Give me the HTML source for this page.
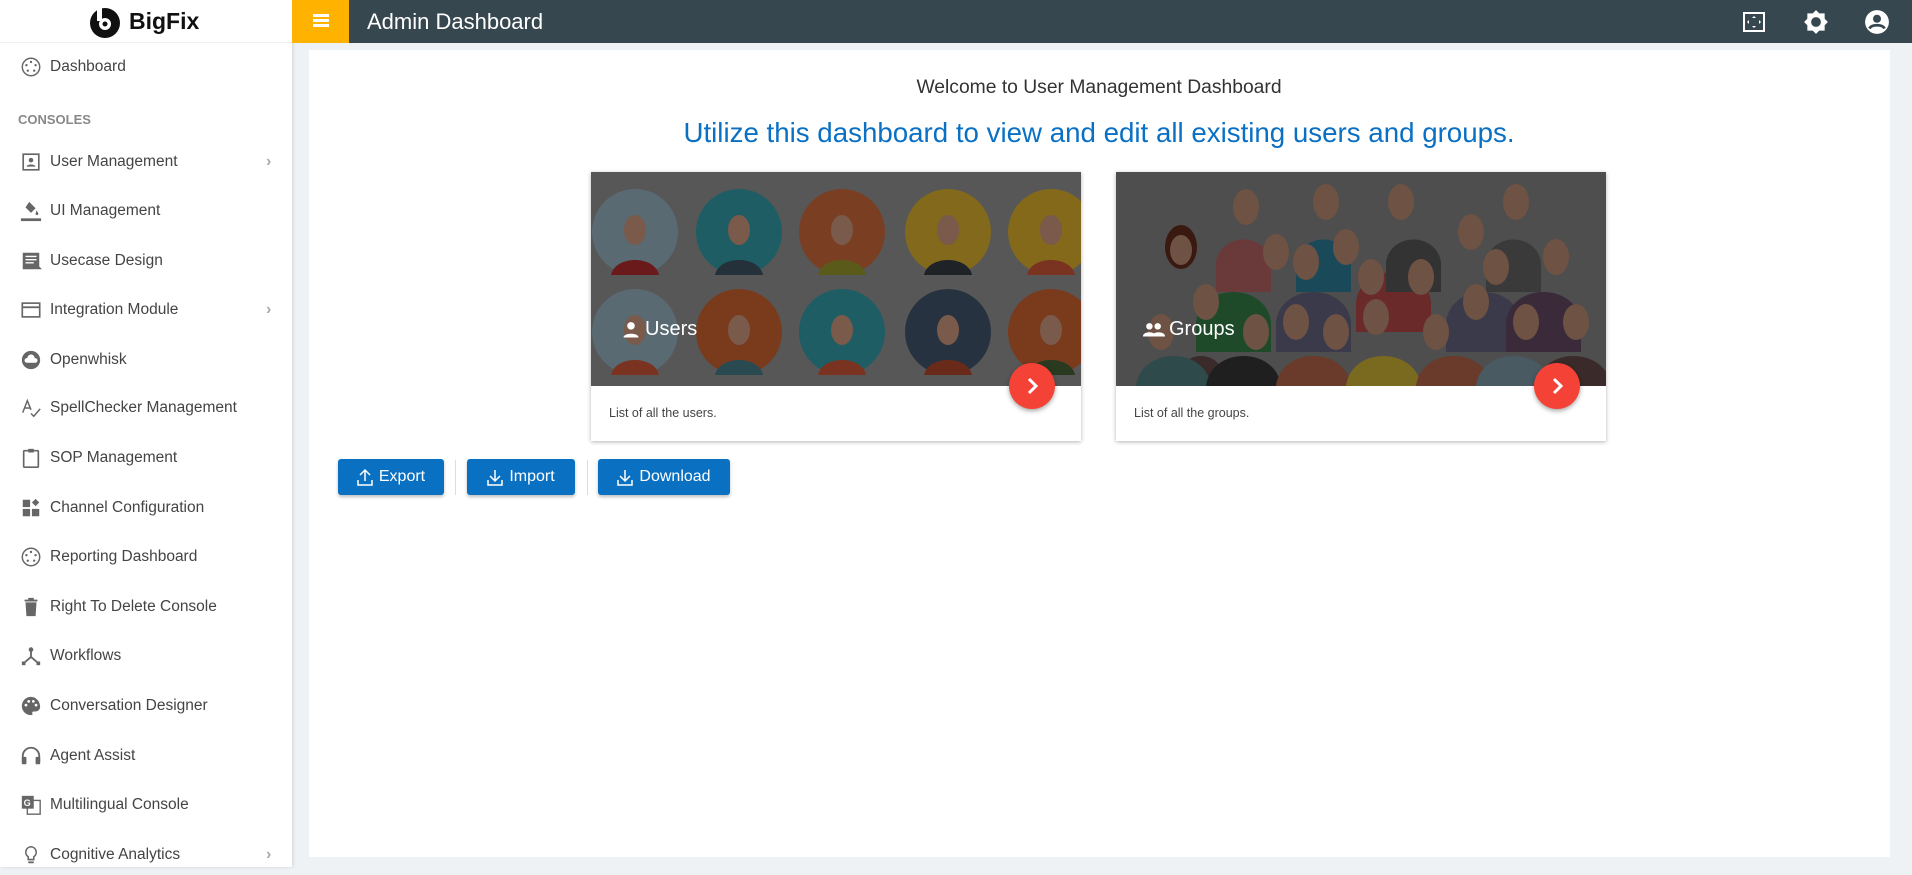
<!DOCTYPE html>
<html><head><meta charset="utf-8"><style>
*{box-sizing:border-box;margin:0;padding:0}
body{width:1912px;height:867px;overflow:hidden;background:#eef2f5;font-family:"Liberation Sans",sans-serif;position:relative}
.sb{position:absolute;left:0;top:0;width:292px;height:867px;background:#fff;box-shadow:1px 0 3px rgba(0,0,0,.12)}
.logo{position:absolute;left:0;top:0;width:292px;height:43px;border-bottom:1px solid #f0f0f0}
.item{position:absolute;left:0;width:292px;height:40px;display:flex;align-items:center;color:#444;font-size:15.5px}
.item svg{position:absolute;left:20px;width:22px;height:22px;fill:#666}
.item span{position:absolute;left:50px}
.item .ch{position:absolute;left:266px;color:#aaa;font-size:16px}
.hdr{position:absolute;left:292px;top:0;right:0;height:43px;background:#37474f}
.ham{position:absolute;left:292px;top:0;width:57px;height:43px;background:#ffb300}
.panel{position:absolute;left:309px;top:50px;width:1581px;height:807px;background:#fff}
.card{position:absolute;top:172px;width:490px;height:269px;background:#fff;box-shadow:0 1px 4px rgba(0,0,0,.3)}
.card .img{position:absolute;left:0;top:0;width:490px;height:214px;overflow:hidden;background:#555}
.card .txt{position:absolute;left:18px;top:234px;font-size:12.5px;color:#444}
.fab{position:absolute;width:46px;height:46px;border-radius:50%;background:#f44336;top:191px;left:418px;box-shadow:0 2px 5px rgba(0,0,0,.35)}
.btn{position:absolute;top:459px;height:36px;background:#0a70c2;border-radius:3px;color:#fff;font-size:16px;display:flex;align-items:center;justify-content:center;gap:6px;box-shadow:0 2px 3px rgba(0,0,0,.25)}
.sep{position:absolute;top:460px;width:1px;height:35px;background:#ddd}
</style></head><body>
<div class="sb">
 <div class="logo">
  <svg style="position:absolute;left:88px;top:5px" width="34" height="34" viewBox="0 0 34 34"><circle cx="17" cy="18" r="15" fill="#111"/><circle cx="17" cy="19" r="6" fill="#fff"/><circle cx="17" cy="19" r="2.5" fill="#111"/><rect x="9" y="2" width="5" height="14" fill="#fff"/></svg>
  <div style="position:absolute;left:129px;top:8px;font-size:23px;font-weight:bold;color:#111">BigFix</div>
 </div>
 <div class="item" style="top:47px"><svg viewBox="0 0 24 24"><circle cx="12" cy="12" r="9.5" fill="none" stroke="#666" stroke-width="1.6"/><circle cx="12" cy="6.5" r="1.3"/><circle cx="7" cy="10" r="1.3"/><circle cx="17" cy="10" r="1.3"/><circle cx="8.5" cy="16" r="1.3"/><circle cx="15.5" cy="16" r="1.3"/></svg><span>Dashboard</span></div>
 <div style="position:absolute;left:18px;top:112px;font-size:13px;color:#888;font-weight:bold">CONSOLES</div>
 <div class="item" style="top:142px"><svg viewBox="0 0 24 24"><rect x="3.5" y="3.5" width="17" height="17" fill="none" stroke="#666" stroke-width="1.8"/><circle cx="12" cy="10" r="2.5"/><path d="M7 17c1-3 9-3 10 0z"/></svg><span>User Management</span><b class="ch">&#8250;</b></div>
 <div class="item" style="top:191px"><svg viewBox="0 0 24 24"><path d="M10 2l7 7-5 5-6-6z M18 11c1 2 2 3 2 4a1.5 1.5 0 0 1-3 0c0-1 1-2 1-4z"/><rect x="1" y="20" width="22" height="3"/></svg><span>UI Management</span></div>
 <div class="item" style="top:241px"><svg viewBox="0 0 24 24"><path d="M3 3h18v15l3 3H3z" /><path d="M6 7h12M6 10.5h12M6 14h9" stroke="#fff" stroke-width="1.5"/></svg><span>Usecase Design</span></div>
 <div class="item" style="top:290px"><svg viewBox="0 0 24 24"><rect x="2.5" y="4.5" width="19" height="15" fill="none" stroke="#666" stroke-width="1.8"/><rect x="2.5" y="8" width="19" height="2"/></svg><span>Integration Module</span><b class="ch">&#8250;</b></div>
 <div class="item" style="top:340px"><svg viewBox="0 0 24 24"><circle cx="12" cy="12" r="10"/><path d="M7 15h10a2.5 2.5 0 0 0-1-5 4 4 0 0 0-8 0 2.5 2.5 0 0 0-1 5z" fill="#fff"/></svg><span>Openwhisk</span></div>
 <div class="item" style="top:388px"><svg viewBox="0 0 24 24"><path d="M3 17L8 4l4 10M5 12h6M12 18l3 3 7-8" fill="none" stroke="#666" stroke-width="1.6"/></svg><span>SpellChecker Management</span></div>
 <div class="item" style="top:438px"><svg viewBox="0 0 24 24"><rect x="4" y="4" width="16" height="18" rx="1" fill="none" stroke="#666" stroke-width="1.8"/><rect x="9" y="2" width="6" height="4"/></svg><span>SOP Management</span></div>
 <div class="item" style="top:488px"><svg viewBox="0 0 24 24"><rect x="3" y="3" width="8" height="8"/><rect x="3" y="13" width="8" height="8"/><rect x="13" y="13" width="8" height="8"/><path d="M17 2l4 4-4 4-4-4z"/></svg><span>Channel Configuration</span></div>
 <div class="item" style="top:537px"><svg viewBox="0 0 24 24"><circle cx="12" cy="12" r="9.5" fill="none" stroke="#666" stroke-width="1.6"/><circle cx="12" cy="6.5" r="1.3"/><circle cx="7" cy="10" r="1.3"/><circle cx="17" cy="10" r="1.3"/><circle cx="8.5" cy="16" r="1.3"/><circle cx="15.5" cy="16" r="1.3"/></svg><span>Reporting Dashboard</span></div>
 <div class="item" style="top:587px"><svg viewBox="0 0 24 24"><path d="M5 4h14v2H5zM9 2h6v2H9zM6 7h12l-1 15H7z"/></svg><span>Right To Delete Console</span></div>
 <div class="item" style="top:636px"><svg viewBox="0 0 24 24"><circle cx="12" cy="5" r="2.5"/><path d="M12 7v6l-7 6M12 13l7 6" fill="none" stroke="#666" stroke-width="2"/><rect x="2" y="18" width="4" height="4"/><rect x="18" y="18" width="4" height="4"/></svg><span>Workflows</span></div>
 <div class="item" style="top:686px"><svg viewBox="0 0 24 24"><path d="M12 2a10 10 0 0 0 0 20c1.5 0 2-1 1.5-2s0-2 1.5-2h2a5 5 0 0 0 5-5c0-6-4.5-11-10-11z"/><circle cx="6.5" cy="11" r="1.5" fill="#fff"/><circle cx="9.5" cy="7" r="1.5" fill="#fff"/><circle cx="14.5" cy="7" r="1.5" fill="#fff"/><circle cx="17.5" cy="11" r="1.5" fill="#fff"/></svg><span>Conversation Designer</span></div>
 <div class="item" style="top:736px"><svg viewBox="0 0 24 24"><path d="M3 19v-7a9 9 0 0 1 18 0v7" fill="none" stroke="#666" stroke-width="2"/><rect x="2" y="13" width="5" height="8" rx="1"/><rect x="17" y="13" width="5" height="8" rx="1"/></svg><span>Agent Assist</span></div>
 <div class="item" style="top:785px"><svg viewBox="0 0 24 24"><rect x="8" y="7" width="14" height="15" fill="none" stroke="#666" stroke-width="1.5"/><rect x="2" y="2" width="13" height="14"/><text x="4" y="13" font-size="10" fill="#fff" font-family="Liberation Sans" font-weight="bold">G</text></svg><span>Multilingual Console</span></div>
 <div class="item" style="top:835px"><svg viewBox="0 0 24 24"><path d="M12 3a6 6 0 0 0-3 11v3h6v-3a6 6 0 0 0-3-11z" fill="none" stroke="#666" stroke-width="1.7"/><rect x="9" y="19" width="6" height="2"/></svg><span>Cognitive Analytics</span><b class="ch">&#8250;</b></div>
</div>
<div class="hdr">
 <div style="position:absolute;left:75px;top:9px;color:#fff;font-size:22px">Admin Dashboard</div>
 <svg style="position:absolute;left:1450px;top:10px" width="24" height="24" viewBox="0 0 24 24"><rect x="2" y="3" width="20" height="18" fill="none" stroke="#fff" stroke-width="2"/><path d="M12 6l2 2h-4zM12 18l2-2h-4zM5 12l2-2v4zM19 12l-2-2v4z" fill="#fff"/></svg>
 <svg style="position:absolute;left:1511px;top:9px" width="26" height="26" viewBox="0 0 24 24"><path d="M12 1l3 3h5v5l3 3-3 3v5h-5l-3 3-3-3H4v-5l-3-3 3-3V4h5z" fill="#fff"/><circle cx="12" cy="12" r="4.5" fill="#37474f"/></svg>
 <svg style="position:absolute;left:1572px;top:9px" width="26" height="26" viewBox="0 0 24 24"><circle cx="12" cy="12" r="11" fill="#fff"/><circle cx="12" cy="9" r="3.7" fill="#37474f"/><path d="M5 18c2-4 12-4 14 0" stroke="#37474f" stroke-width="2.6" fill="none"/></svg>
</div>
<div class="ham"><div style="position:absolute;left:21px;top:14px;width:16px;height:2.5px;background:#fff;box-shadow:0 5px 0 #fff,0 10px 0 #fff"></div></div>
<div class="panel"></div>
<div style="position:absolute;left:0;width:2198px;top:77px;text-align:center;font-size:19.3px;color:#333">Welcome to User Management Dashboard</div>
<div style="position:absolute;left:0;width:2198px;top:117px;text-align:center;font-size:27.7px;color:#0a70c4">Utilize this dashboard to view and edit all existing users and groups.</div>

<div class="card" style="left:591px">
 <div class="img"><svg width="490" height="214">
  <rect width="490" height="214" fill="#575757"/>
  <g>
   <circle cx="44" cy="60" r="43" fill="#5a6a72"/><circle cx="148" cy="60" r="43" fill="#1e5d63"/><circle cx="251" cy="60" r="43" fill="#7a3f22"/><circle cx="357" cy="60" r="43" fill="#82691c"/><circle cx="460" cy="60" r="43" fill="#84691a"/>
   <circle cx="44" cy="160" r="43" fill="#5a6a72"/><circle cx="148" cy="160" r="43" fill="#7a3a1c"/><circle cx="251" cy="160" r="43" fill="#1e5d63"/><circle cx="357" cy="160" r="43" fill="#263240"/><circle cx="460" cy="160" r="43" fill="#7a3a1c"/>
  </g>
  <g fill="#7a5a4a">
   <ellipse cx="44" cy="58" rx="11" ry="15"/><ellipse cx="148" cy="58" rx="11" ry="15"/><ellipse cx="251" cy="58" rx="11" ry="15"/><ellipse cx="357" cy="58" rx="11" ry="15"/><ellipse cx="460" cy="58" rx="11" ry="15"/>
   <ellipse cx="44" cy="158" rx="11" ry="15"/><ellipse cx="148" cy="158" rx="11" ry="15"/><ellipse cx="251" cy="158" rx="11" ry="15"/><ellipse cx="357" cy="158" rx="11" ry="15"/><ellipse cx="460" cy="158" rx="11" ry="15"/>
  </g>
  <g>
   <path d="M20 103c4-20 44-20 48 0z" fill="#6a1a1a"/><path d="M124 103c4-20 44-20 48 0z" fill="#24303a"/><path d="M227 103c4-20 44-20 48 0z" fill="#5a5a1a"/><path d="M333 103c4-20 44-20 48 0z" fill="#1f2328"/><path d="M436 103c4-20 44-20 48 0z" fill="#7a3320"/>
   <path d="M20 203c4-20 44-20 48 0z" fill="#7a3320"/><path d="M124 203c4-20 44-20 48 0z" fill="#2a4a52"/><path d="M227 203c4-20 44-20 48 0z" fill="#7a3320"/><path d="M333 203c4-20 44-20 48 0z" fill="#6a2a1a"/><path d="M436 203c4-20 44-20 48 0z" fill="#2a3a20"/>
  </g>
 </svg></div>
 <div style="position:absolute;left:30px;top:146px;color:#fff;font-size:20px;display:flex;align-items:center;gap:4px"><svg width="20" height="20" viewBox="0 0 24 24"><circle cx="12" cy="7" r="4.5" fill="#fff"/><path d="M3 21c0-6 18-6 18 0z" fill="#fff"/></svg>Users</div>
 <div class="fab"><svg width="46" height="46" viewBox="0 0 46 46"><path d="M20 16l7 7-7 7" stroke="#fff" stroke-width="3" fill="none"/></svg></div>
 <div class="txt">List of all the users.</div>
</div>

<div class="card" style="left:1116px">
 <div class="img"><svg width="490" height="214">
  <rect width="490" height="214" fill="#4e4e4e"/>
  <g>
   <path d="M60 214c0-40 50-40 50 0z" fill="#3a2a2a"/>
   <path d="M20 214c5-40 70-40 75 0z" fill="#2f4a4a"/><path d="M90 214c5-40 70-40 75 0z" fill="#1f1f1f"/><path d="M160 214c5-40 70-40 75 0z" fill="#6a3a2a"/><path d="M230 214c5-40 70-40 75 0z" fill="#7a6a20"/><path d="M300 214c5-40 70-40 75 0z" fill="#6a3a2a"/><path d="M360 214c5-40 70-40 75 0z" fill="#4a5a62"/><path d="M420 214c5-40 70-40 75 0z" fill="#3a2a2a"/>
   <path d="M80 150c5-40 70-40 75 0v30h-75z" fill="#1f4a2a"/><path d="M160 150c5-40 70-40 75 0v30h-75z" fill="#3a3a4a"/><path d="M240 130c5-40 70-40 75 0v30h-75z" fill="#6a2a2a"/><path d="M330 150c5-40 70-40 75 0v30h-75z" fill="#3a3a4a"/><path d="M390 150c5-40 70-40 75 0v30h-75z" fill="#3a2a3a"/>
   <path d="M100 90c5-30 50-30 55 0v30h-55z" fill="#6a3a3a"/><path d="M180 90c5-30 50-30 55 0v30h-55z" fill="#1a4a5a"/><path d="M270 90c5-30 50-30 55 0v30h-55z" fill="#333"/><path d="M370 90c5-30 50-30 55 0v30h-55z" fill="#3a3a3a"/>
  </g>
  <g fill="#6e5244">
   <ellipse cx="65" cy="75" rx="16" ry="22" fill="#3a1a10"/><ellipse cx="65" cy="78" rx="11" ry="15"/>
   <ellipse cx="130" cy="35" rx="13" ry="18"/><ellipse cx="210" cy="30" rx="13" ry="18"/><ellipse cx="285" cy="30" rx="13" ry="18"/><ellipse cx="355" cy="60" rx="13" ry="18"/><ellipse cx="400" cy="30" rx="13" ry="18"/>
   <ellipse cx="160" cy="80" rx="13" ry="18"/><ellipse cx="230" cy="75" rx="13" ry="18"/><ellipse cx="255" cy="105" rx="13" ry="18"/><ellipse cx="305" cy="105" rx="13" ry="18"/><ellipse cx="380" cy="95" rx="13" ry="18"/><ellipse cx="440" cy="85" rx="13" ry="18"/><ellipse cx="190" cy="90" rx="13" ry="18"/>
   <ellipse cx="90" cy="130" rx="13" ry="18"/><ellipse cx="140" cy="160" rx="13" ry="18"/><ellipse cx="180" cy="150" rx="13" ry="18"/><ellipse cx="220" cy="160" rx="13" ry="18"/><ellipse cx="260" cy="145" rx="13" ry="18"/><ellipse cx="320" cy="160" rx="13" ry="18"/><ellipse cx="360" cy="130" rx="13" ry="18"/><ellipse cx="410" cy="150" rx="13" ry="18"/><ellipse cx="460" cy="150" rx="13" ry="18"/><ellipse cx="45" cy="160" rx="13" ry="18"/>
  </g>
 </svg></div>
 <div style="position:absolute;left:26px;top:146px;color:#fff;font-size:20px;display:flex;align-items:center;gap:3px"><svg width="24" height="20" viewBox="0 0 26 20"><circle cx="8" cy="6" r="3.5" fill="#fff"/><circle cx="17" cy="6" r="3.5" fill="#fff"/><path d="M1 17c0-6 14-6 14 0zM11 17c0-6 14-6 14 0z" fill="#fff"/></svg>Groups</div>
 <div class="fab"><svg width="46" height="46" viewBox="0 0 46 46"><path d="M20 16l7 7-7 7" stroke="#fff" stroke-width="3" fill="none"/></svg></div>
 <div class="txt">List of all the groups.</div>
</div>

<div class="btn" style="left:338px;width:106px"><svg width="16" height="18" viewBox="0 0 16 18"><path d="M8 13V2M3 7l5-5 5 5M1 12v5h14v-5" stroke="#fff" stroke-width="1.5" fill="none"/></svg>Export</div>
<div class="sep" style="left:455px"></div>
<div class="btn" style="left:467px;width:108px"><svg width="16" height="18" viewBox="0 0 16 18"><path d="M8 2v11M3 8l5 5 5-5M1 12v5h14v-5" stroke="#fff" stroke-width="1.5" fill="none"/></svg>Import</div>
<div class="sep" style="left:587px"></div>
<div class="btn" style="left:598px;width:132px"><svg width="16" height="18" viewBox="0 0 16 18"><path d="M8 2v11M3 8l5 5 5-5M1 12v5h14v-5" stroke="#fff" stroke-width="1.5" fill="none"/></svg>Download</div>
</body></html>
